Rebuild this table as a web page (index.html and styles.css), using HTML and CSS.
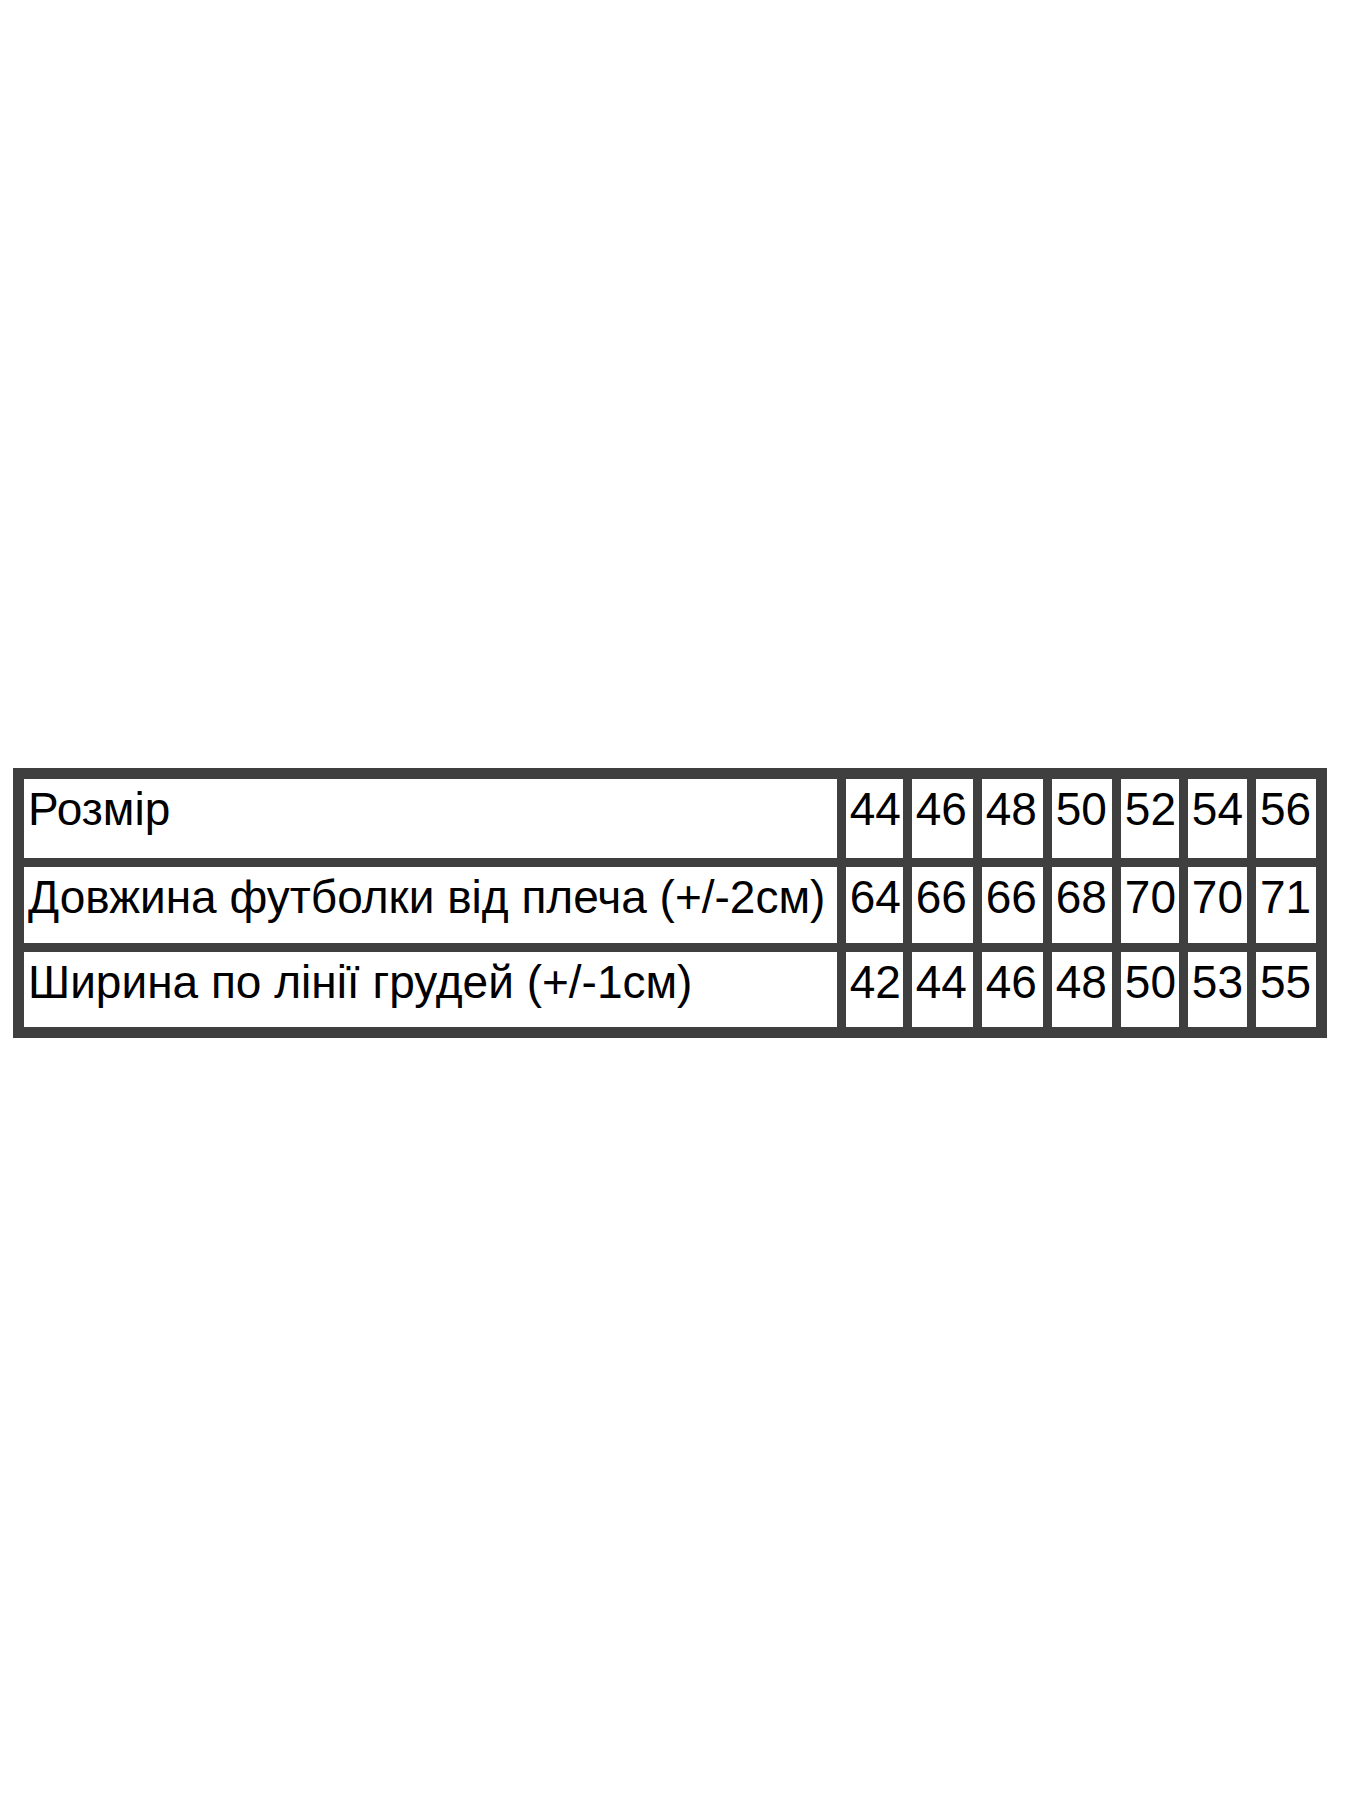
FILE: index.html
```html
<!DOCTYPE html>
<html lang="uk">
<head>
<meta charset="utf-8">
<title>Таблиця розмірів</title>
<link rel="stylesheet" href="styles.css">
</head>
<body>
<main class="page">
  <table class="sizes">
    <colgroup>
      <col class="c-label">
      <col class="c1"><col class="c2"><col class="c3"><col class="c4"><col class="c5"><col class="c6"><col class="c7">
    </colgroup>
    <tbody>
      <tr class="r1">
        <td>Розмір</td><td>44</td><td>46</td><td>48</td><td>50</td><td>52</td><td>54</td><td>56</td>
      </tr>
      <tr class="r2">
        <td>Довжина футболки від плеча (+/-2см)</td><td>64</td><td>66</td><td>66</td><td>68</td><td>70</td><td>70</td><td>71</td>
      </tr>
      <tr class="r3">
        <td>Ширина по лінії грудей (+/-1см)</td><td>42</td><td>44</td><td>46</td><td>48</td><td>50</td><td>53</td><td>55</td>
      </tr>
    </tbody>
  </table>
</main>
</body>
</html>
```

FILE: styles.css
```css
html, body {
  margin: 0;
  padding: 0;
  background: #ffffff;
}

.page {
  width: 1350px;
  height: 1800px;
  padding: 768px 0 0 13px;
  box-sizing: border-box;
}

.sizes {
  border-collapse: collapse;
  table-layout: fixed;
  width: 1314px;
  border: 11px solid #3f3f3f;
  font-family: "Liberation Sans", Arial, sans-serif;
  font-size: 46px;
  color: #000000;
}

.sizes td {
  border: 9px solid #3f3f3f;
  padding: 4px 3px 0 4px;
  vertical-align: top;
  text-align: left;
  white-space: nowrap;
  overflow: hidden;
  line-height: 52px;
}

.c-label { width: 822px; }
.c1 { width: 66px; }
.c2 { width: 70px; }
.c3 { width: 70px; }
.c4 { width: 69px; }
.c5 { width: 67px; }
.c6 { width: 68px; }
.c7 { width: 70px; }

.r1 { height: 89px; }
.r2 { height: 85px; }
.r3 { height: 85px; }
```
